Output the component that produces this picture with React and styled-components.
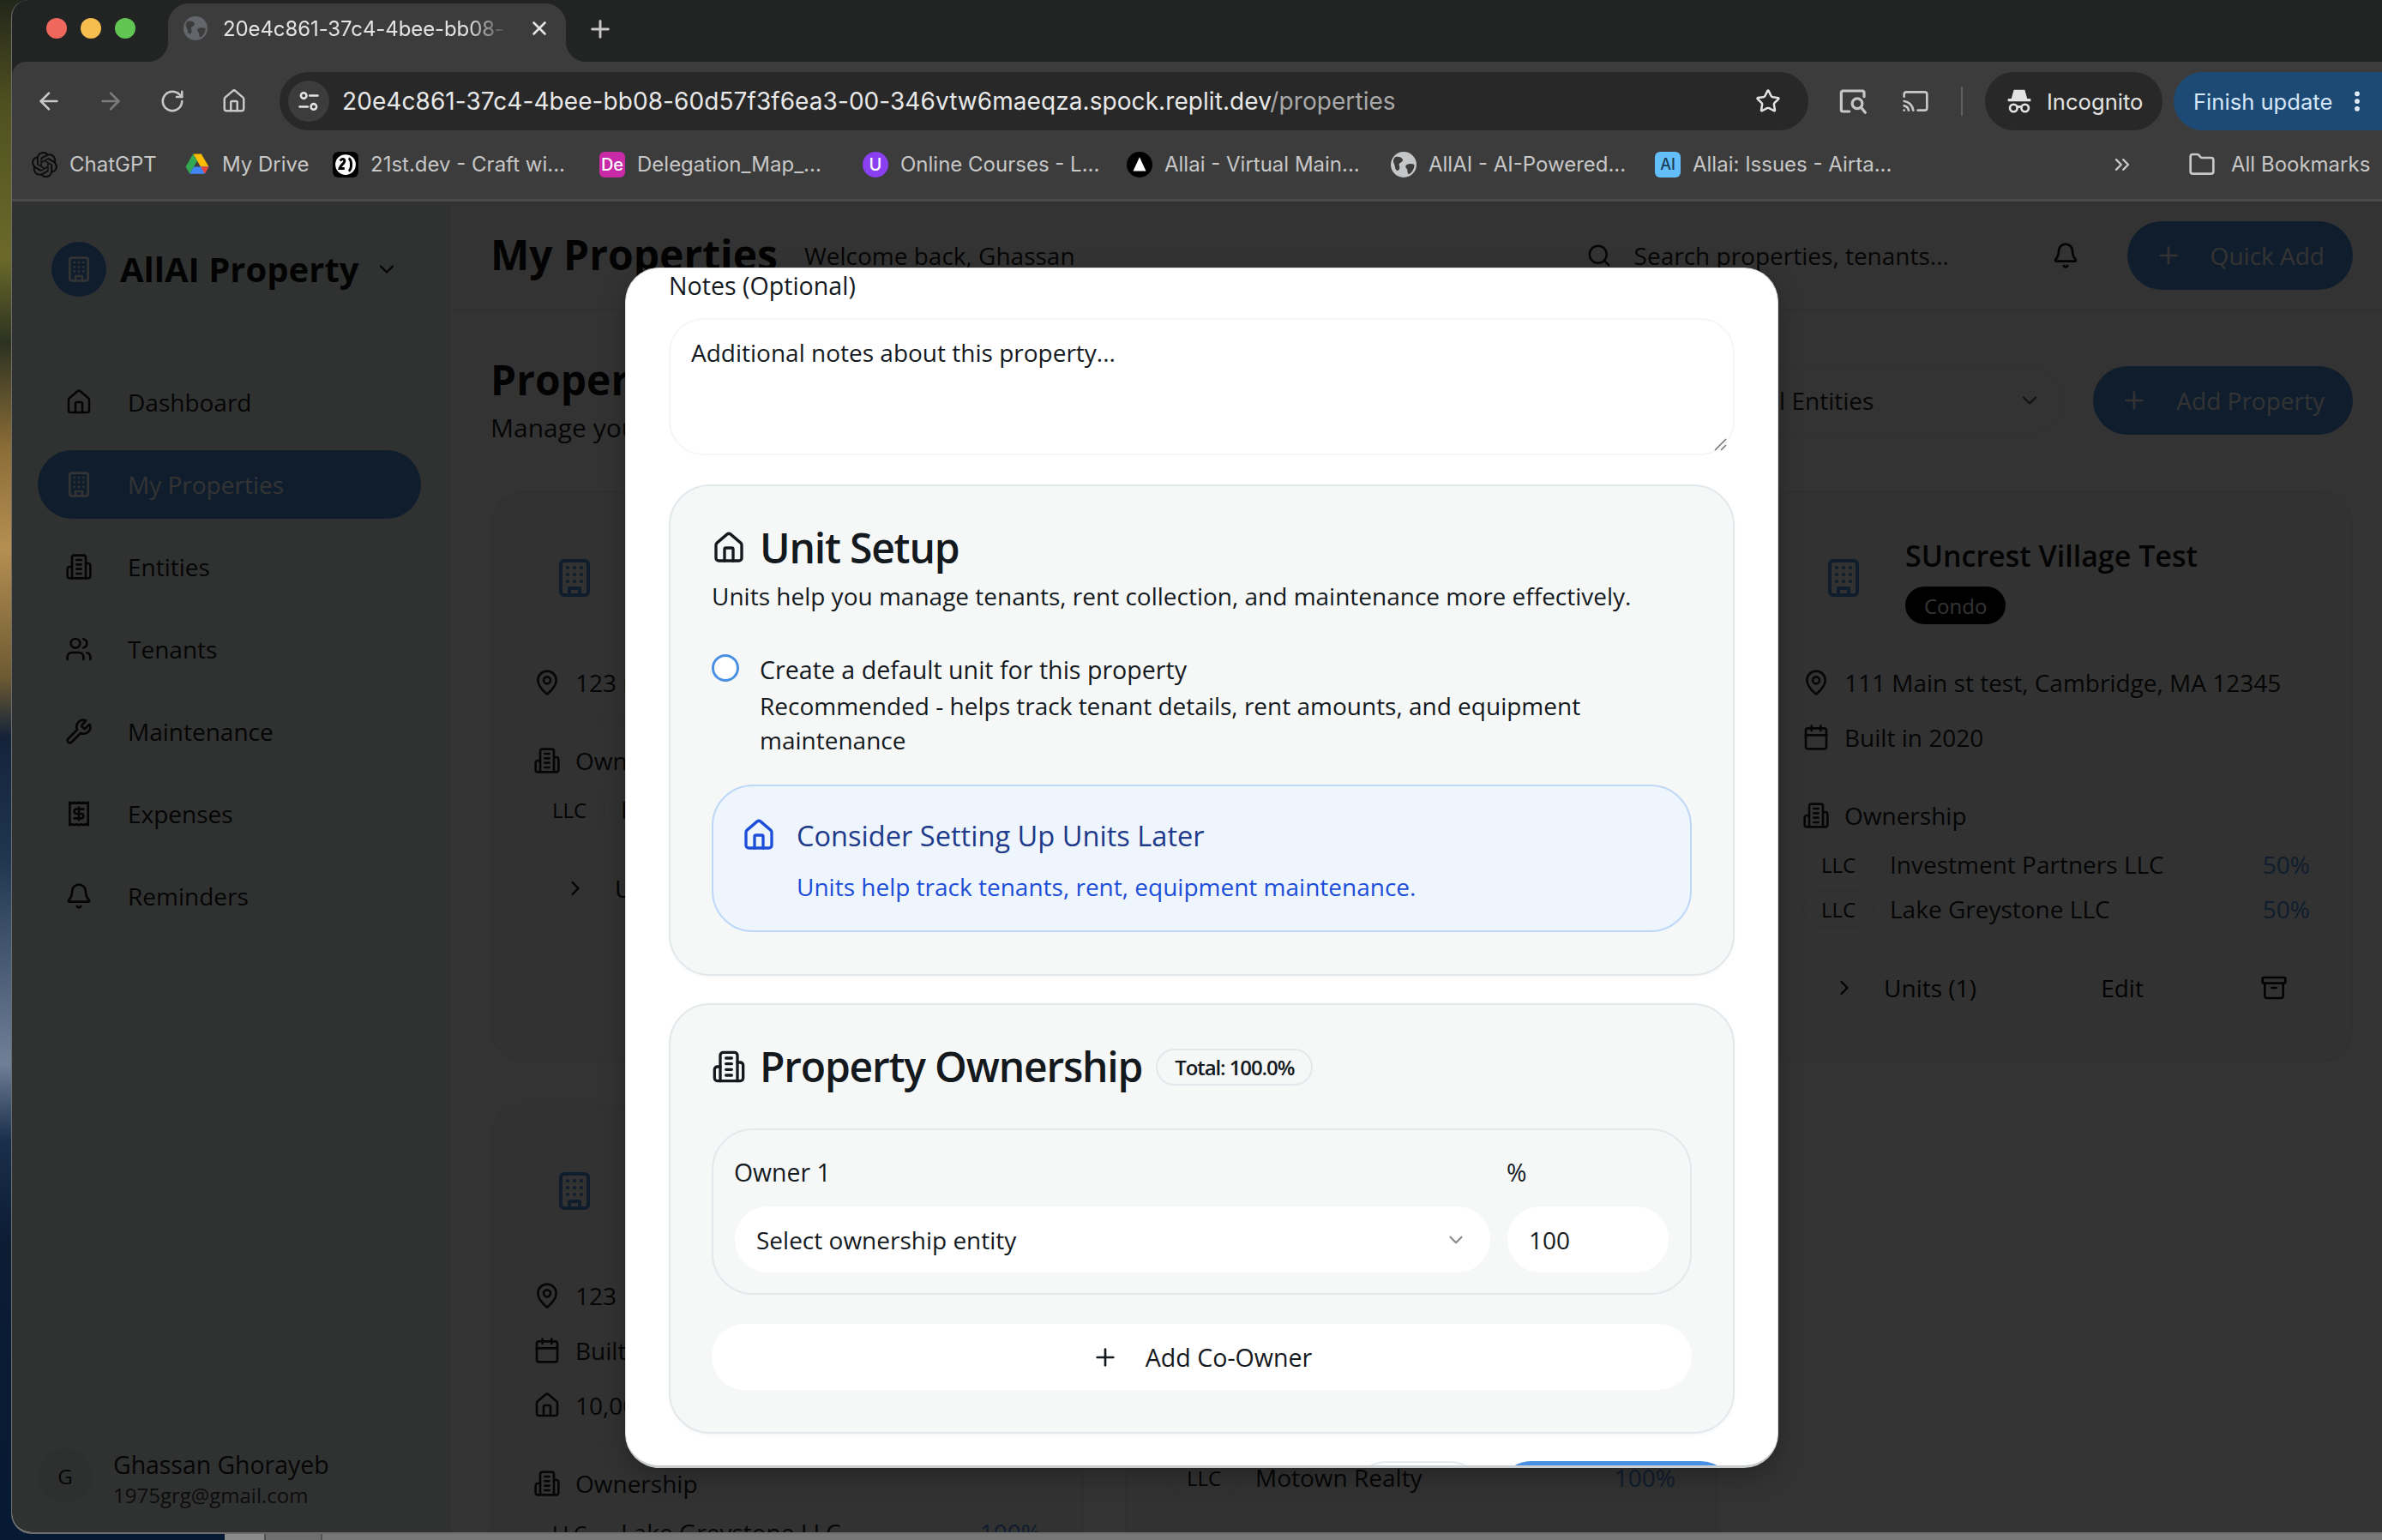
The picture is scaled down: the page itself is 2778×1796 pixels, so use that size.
import React from "react";
import styled, { createGlobalStyle } from "styled-components";
import {
  ArrowLeft, ArrowRight, RotateCw, Home, Star, Cast, MoreVertical, X, Plus, Folder, ChevronsRight,
  ChevronDown, ChevronRight, Users, Wrench, Receipt, Bell, Search, MapPin, Calendar, Archive,
} from "lucide-react";
import { SiOpenai } from "react-icons/si";

const GlobalStyle = createGlobalStyle`
  html, body { margin: 0; padding: 0; background: #0b1a2c; }
  * { box-sizing: border-box; }
`;

const CHROME = `Inter, "Liberation Sans", sans-serif`;
const APP = `"Open Sans", "Noto Sans", sans-serif`;

const Desktop = styled.div`
  width: 2778px; height: 1796px; overflow: hidden; display: flex; flex-direction: column;
  background: linear-gradient(180deg, #23271a 0, #4f5020 120px, #6b6a2a 300px, #2c3220 400px, #8a6c36 520px, #b58f52 640px, #6d5a32 790px, #14233a 860px, #1f3550 1000px, #6f7f96 1240px, #1a2f4c 1330px, #0b1c33 1450px, #071a33 100%);
`;
const Window = styled.div`
  height: 1789px; margin-left: 13px; flex: none; display: flex; flex-direction: column; overflow: hidden;
  background: #222423; border-left: 1px solid #6e6e6e; border-bottom: 2px solid #6e6e6e;
  border-radius: 20px 0 0 24px; font-family: ${CHROME};
`;
const DockStrip = styled.div`
  flex: 1; margin-left: 262px; background: linear-gradient(90deg, #8b8b8b 0, #8b8b8b 46px, #222 47px, #6f6f6f 48px, #6f6f6f 112px, #333 113px, #777 114px);
`;

/* tab strip */
const TabStrip = styled.div`
  height: 72px; flex: none; display: flex; align-items: flex-end; padding-left: 40px; color: #e3e3e3;
`;
const Lights = styled.div`
  display: flex; gap: 16px; align-self: flex-start; padding-top: 21px; margin-right: 38px;
`;
const Light = styled.span`
  width: 24px; height: 24px; border-radius: 50%; background: ${(p) => p.$c};
`;
const Tab = styled.div`
  position: relative; width: 464px; height: 68px; background: #3c3c3c; border-radius: 24px 24px 0 0;
  display: flex; align-items: center; padding: 0 0 10px 18px; gap: 18px;
  &::before, &::after { content: ""; position: absolute; bottom: 0; width: 24px; height: 24px; }
  &::before { left: -24px; background: radial-gradient(circle at 0 0, transparent 24px, #3c3c3c 24.5px); }
  &::after { right: -24px; background: radial-gradient(circle at 100% 0, transparent 24px, #3c3c3c 24.5px); }
`;
const TabTitle = styled.span`
  width: 333px; white-space: nowrap; font-size: 24px; color: #e3e3e3; letter-spacing: -0.1px;
  -webkit-mask-image: linear-gradient(90deg, #000 86%, transparent 100%);
  mask-image: linear-gradient(90deg, #000 86%, transparent 100%);
`;
const TabClose = styled.span`
  display: flex; color: #e3e3e3; margin-left: 5px;
`;
const NewTab = styled.span`
  display: flex; align-self: center; margin: -4px 0 0 24px; color: #c7c7c7;
`;

/* toolbar */
const Toolbar = styled.div`
  height: 86px; flex: none; display: flex; align-items: flex-end; padding: 0 0 6px 7px; background: #3c3c3c;
  border-radius: 16px 0 0 0; color: #c7c7c7;
`;
const NavBtn = styled.span`
  width: 72px; height: 68px; flex: none; display: flex; align-items: center; justify-content: center;
  color: ${(p) => (p.$dim ? "#7b7b7b" : "#c7c7c7")};
`;
const Address = styled.div`
  flex: 1; height: 68px; margin: 0 17px; border-radius: 34px; background: #282828; display: flex; align-items: center;
  padding: 0 32px 0 10px; min-width: 0;
`;
const TuneChip = styled.span`
  width: 48px; height: 48px; border-radius: 50%; background: #3c3c3c; display: flex; align-items: center; justify-content: center; flex: none;
  margin-right: 15px; color: #e3e3e3;
`;
const Url = styled.span`
  flex: 1; font-size: 28px; color: #e8e8e8; white-space: nowrap; letter-spacing: 0.07px;
`;
const UrlPath = styled.span`
  color: #a8a8a8;
`;
const ToolDivider = styled.span`
  width: 2px; height: 34px; background: #5e5e5e; margin: 0 26px 17px 17px; flex: none;
`;
const Incognito = styled.div`
  width: 207px; height: 68px; flex: none; border-radius: 34px; background: #282828; display: flex; align-items: center;
  padding-left: 24px; gap: 16px; font-size: 25.6px; color: #e3e3e3;
`;
const FinishUpdate = styled.div`
  width: 243px; height: 68px; flex: none; margin-left: 13px; border-radius: 34px 0 0 34px; background: #1d4a75; display: flex; align-items: center;
  padding-left: 23px; font-size: 25.6px; color: #d5e6f8; justify-content: space-between; padding-right: 14px;
`;

/* bookmarks */
const Bookmarks = styled.div`
  height: 77px; flex: none; display: flex; padding: 0 16px 7px 23px; align-items: center; background: #3c3c3c;
  border-bottom: 3px solid #4a4a4a; font-size: 24px; color: #c7c7c7;
`;
const Bookmark = styled.div`
  width: ${(p) => p.$w}px; flex: none; display: flex; align-items: center; gap: 14px; white-space: nowrap;
`;
const Favicon = styled.span`
  width: 30px; height: 30px; flex: none; display: flex; align-items: center; justify-content: center; border-radius: ${(p) => p.$r || "6px"};
  background: ${(p) => p.$bg || "transparent"}; color: ${(p) => p.$fg || "#fff"}; font-size: ${(p) => p.$fs || 18}px; font-weight: 500; overflow: hidden;
`;
const MoreBookmarks = styled.span`
  display: flex; margin-left: 291px; color: #c7c7c7;
`;
const BookmarkDivider = styled.span`
  width: 2px; height: 32px; background: #5e5e5e; margin: 0 33px 0 30px;
`;
const AllBookmarks = styled.div`
  display: flex; align-items: center; gap: 18px; white-space: nowrap;
`;

/* app */
const AppArea = styled.div`
  position: relative; flex: 1; min-height: 0; display: flex; background: #fff; font-family: ${APP}; color: #1a1f24;
`;
const Sidebar = styled.aside`
  width: 511px; flex: none; display: flex; flex-direction: column; background: #f0f5f5; border-right: 2px solid #eaeeee;
`;
const Brand = styled.div`
  height: 159px; flex: none; display: flex; align-items: center; padding-left: 46px; gap: 16px; border-bottom: 2px solid #eaeeee;
`;
const BrandLogo = styled.span`
  width: 64px; height: 64px; border-radius: 50%; background: #4a90e2; color: #fff; display: flex; align-items: center; justify-content: center; flex: none;
`;
const BrandName = styled.span`
  font-size: 40px; font-weight: 700; color: #111; white-space: nowrap;
`;
const BrandCaret = styled.span`
  display: flex; margin-left: 2px; color: #111;
`;
const Nav = styled.nav`
  flex: 1; display: flex; flex-direction: column; gap: 16px; padding: 35px 32px 0 30px;
`;
const NavItem = styled.div`
  height: 80px; border-radius: 40px; display: flex; align-items: center; gap: 41px; padding: 0 32px; font-size: 28px;
  background: ${(p) => (p.$active ? "#4a90e2" : "transparent")}; color: ${(p) => (p.$active ? "#fff" : "#1c1c1c")};
`;
const SideFooter = styled.div`
  height: 136px; flex: none; border-top: 2px solid #eaeeee; display: flex; align-items: flex-start; padding: 36px 0 0 30px; gap: 24px;
`;
const Avatar = styled.span`
  width: 64px; height: 64px; border-radius: 50%; background: #e6e9e9; display: flex; align-items: center; justify-content: center; font-size: 24px; font-weight: 500; color: #222; flex: none;
`;
const UserText = styled.div`
  display: flex; flex-direction: column; margin-top: 0;
`;
const UserName = styled.span`
  font-size: 28.4px; line-height: 38px; color: #222; white-space: nowrap;
`;
const UserMail = styled.span`
  font-size: 24px; line-height: 34px; color: #444; white-space: nowrap;
`;

const Main = styled.main`
  flex: 1; min-width: 0; display: flex; flex-direction: column; overflow: hidden;
`;
const TopBar = styled.header`
  height: 127px; flex: none; display: flex; align-items: center; padding: 0 34px 0 47px; border-bottom: 2px solid #f0f2f2; gap: 31px;
`;
const PageTitle = styled.h1`
  margin: 0 0 3px; font-size: 48px; font-weight: 700; color: #111; white-space: nowrap;
`;
const Welcome = styled.span`
  font-size: 28px; color: #222; white-space: nowrap; margin-top: 1px;
`;
const TopRight = styled.div`
  margin-left: auto; display: flex; align-items: center; gap: 40px;
`;
const SearchBox = styled.div`
  width: 495px; height: 64px; display: flex; align-items: center; gap: 26px; padding-left: 8px; font-size: 28px; color: #222; border-radius: 32px;
`;
const BellBtn = styled.span`
  width: 64px; height: 64px; display: flex; align-items: center; justify-content: center; color: #111;
`;
const PrimaryBtn = styled.div`
  height: 80px; border-radius: 40px; background: #4a90e2; color: #fff; display: flex; align-items: center; gap: 33px; padding: 0 33px 0 32px; font-size: 28px; font-weight: 500; white-space: nowrap;
`;
const PageHead = styled.section`
  flex: none; display: flex; align-items: center; justify-content: space-between; padding: 53px 34px 53px 47px;
`;
const HeadText = styled.div`
  display: flex; flex-direction: column; gap: 8px;
`;
const SectionTitle = styled.h2`
  margin: 0; font-size: 48px; line-height: 56px; font-weight: 700; color: #111;
`;
const SectionSub = styled.p`
  margin: 0; font-size: 30px; line-height: 40px; color: #222;
`;
const HeadActions = styled.div`
  display: flex; align-items: center; gap: 34px;
`;
const EntitySelect = styled.div`
  width: 410px; height: 80px; display: flex; align-items: center; justify-content: space-between; padding: 0 24px 0 51px; font-size: 28px; color: #222; border: 2px solid #f4f6f6; border-radius: 40px;
`;
const CardGrid = styled.div`
  display: grid; grid-template-columns: repeat(3, 1fr); gap: 48px; padding: 0 34px 0 47px; align-items: stretch;
`;
const Card = styled.article`
  min-height: 667px; background: #f7f9f9; border: 2px solid #ecefef; border-radius: 40px; padding: 46px 48px 50px;
`;
const CardHead = styled.div`
  display: flex; gap: 24px; height: 108px; margin-bottom: 48px;
`;
const CardIcon = styled.span`
  width: 96px; flex: none; display: flex; align-items: center; justify-content: center; color: #4a90e2;
`;
const CardTitles = styled.div`
  display: flex; flex-direction: column; align-items: flex-start; gap: 8px;
`;
const CardTitle = styled.h3`
  margin: 0; font-size: 34px; line-height: 56px; font-weight: 600; color: #111; white-space: nowrap;
`;
const Kind = styled.span`
  height: 44px; display: flex; align-items: center; padding: 0 22px; border-radius: 22px; background: #000; color: #fff; font-size: 24px; font-weight: 500;
`;
const InfoList = styled.div`
  display: flex; flex-direction: column; gap: 24px;
`;
const InfoRow = styled.div`
  height: 40px; display: flex; align-items: center; gap: 17px; font-size: 28px; color: #222; white-space: nowrap;
`;
const CardDivider = styled.hr`
  border: 0; border-top: 2px solid #eceeee; margin: 23px 0 26px;
`;
const OwnerHead = styled(InfoRow)`
  margin-bottom: 15px;
`;
const OwnerRow = styled.div`
  height: 44px; display: flex; align-items: center; font-size: 28px; color: #222; margin-bottom: 8px; white-space: nowrap;
`;
const LlcTag = styled.span`
  width: 84px; height: 44px; flex: none; border-radius: 22px; border: 2px solid #ecefef; display: flex; align-items: center; justify-content: center; font-size: 24px; font-weight: 500; margin-right: 18px; color: #111;
`;
const OwnerShare = styled.span`
  margin-left: auto; color: #4a90e2;
`;
const CardActions = styled.div`
  display: grid; grid-template-columns: 1fr 1fr 84px; height: 64px; margin-top: 38px; font-size: 28px; font-weight: 500; color: #111; gap: 16px;
`;
const CardAction = styled.span`
  display: flex; align-items: center; justify-content: center; gap: 32px; border-radius: 32px; white-space: nowrap;
`;

/* modal */
const Overlay = styled.div`
  position: absolute; inset: 0; background: rgba(0, 0, 0, 0.8); display: flex; align-items: center; justify-content: center; padding: 2px 0 0 11px;
`;
const Modal = styled.div`
  width: 1345px; height: 1400px; background: #fff; border-radius: 40px; overflow: hidden; padding: 0 50px; border: 1px solid #d7dbde; border-bottom: 3px solid #c9cdd0;
  box-shadow: 0 10px 30px rgba(0,0,0,.25); color: #14191e; font-size: 28px;
`;
const FieldLabel = styled.div`
  font-size: 28.6px; line-height: 40px; font-weight: 500; color: #14191e;
`;
const NotesBox = styled.div`
  position: relative; height: 160px; margin: 18px 0 34px; border: 2px solid #f4f6f7; border-radius: 40px; padding: 18px 24px; font-size: 28px; line-height: 40px;
`;
const Grip = styled.svg`
  position: absolute; right: 6px; bottom: 2px; color: #777;
`;
const Panel = styled.section`
  background: #f6f8f8; border: 2px solid #e3e8ec; border-radius: 48px; padding: 46px 48px 49px; margin-bottom: 32px; box-shadow: 0 2px 4px rgba(0,0,0,.03);
`;
const PanelTitleRow = styled.div`
  display: flex; align-items: center; gap: 16px; height: 52px;
`;
const PanelTitle = styled.h3`
  margin: 0; font-size: 48px; font-weight: 600; line-height: 52px; white-space: nowrap; color: #14191e; letter-spacing: -1.2px;
`;
const PanelIntro = styled.p`
  margin: 10px 0 46px; font-size: 28px; line-height: 40px; white-space: nowrap;
`;
const RadioRow = styled.div`
  display: flex; gap: 24px;
`;
const Radio = styled.span`
  width: 32px; height: 32px; margin-top: 2px; flex: none; border-radius: 50%; border: 3px solid #4a90e2; background: #fff;
`;
const RadioText = styled.div`
  display: flex; flex-direction: column; font-size: 28px; line-height: 40px;
`;
const RadioTitle = styled.span`
  font-size: 28.6px; font-weight: 500; margin-bottom: 2px;
`;
const Callout = styled.div`
  margin-top: 32px; height: 172px; border: 2px solid #bcd7f7; background: #eef5fd; border-radius: 48px; padding: 35px 33px 0; color: #1e3a8a; position: relative;
`;
const CalloutHead = styled.div`
  display: flex; align-items: center; gap: 24px; height: 44px; color: #1d4ed8;
`;
const CalloutTitle = styled.span`
  font-size: 32.6px; font-weight: 500; color: #1e3a8a; white-space: nowrap;
`;
const CalloutText = styled.p`
  margin: 18px 0 0 64px; font-size: 28px; line-height: 40px; color: #1d4ed8; white-space: nowrap;
`;
const Badge = styled.span`
  height: 43px; display: flex; align-items: center; padding: 0 20px; border: 2px solid #e3e8ec; border-radius: 22px; font-size: 24px; font-weight: 600; letter-spacing: -1.1px; white-space: nowrap;
`;
const OwnerBox = styled.div`
  margin-top: 46px; border: 2px solid #e3e8ec; border-radius: 48px; padding: 29px 25px 24px; display: grid; grid-template-columns: 1fr 188px; column-gap: 20px; row-gap: 20px;
`;
const GridLabel = styled.span`
  font-size: 28.4px; line-height: 40px; font-weight: 500; margin-left: -1px;
`;
const WhiteField = styled.div`
  height: 77px; background: #fff; border-radius: 40px; display: flex; align-items: center; justify-content: space-between; padding: 0 27px 0 25px; font-size: 28px;
`;
const AddOwner = styled.div`
  margin-top: 34px; height: 77px; background: #fff; border-radius: 40px; display: flex; align-items: center; justify-content: center; gap: 31px; font-size: 28.6px; font-weight: 500;
`;
const ModalFooter = styled.div`
  display: flex; justify-content: flex-end; gap: 15px;
`;
const OutlineAction = styled.span`
  width: 154px; height: 80px; border: 2px solid #e6eaec; border-radius: 40px;
`;
const SubmitAction = styled.span`
  width: 277px; height: 80px; background: #4a90e2; border-radius: 40px;
`;

/* small drawings */
const StrokeIcon = ({ size = 32, children }) => (
  <svg width={size} height={size} viewBox="0 0 24 24" fill="none" stroke="currentColor" strokeWidth="2" strokeLinecap="round" strokeLinejoin="round">
    {children}
  </svg>
);
const BuildingIcon = ({ size }) => (
  <StrokeIcon size={size}>
    <rect x="4" y="2" width="16" height="20" rx="2" />
    <path d="M9 22v-4h6v4M8 6h.01M12 6h.01M16 6h.01M8 10h.01M12 10h.01M16 10h.01M8 14h.01M12 14h.01M16 14h.01" />
  </StrokeIcon>
);
const EntityIcon = ({ size }) => (
  <StrokeIcon size={size}>
    <path d="M6 22V4a2 2 0 0 1 2-2h8a2 2 0 0 1 2 2v18Z" />
    <path d="M6 12H4a2 2 0 0 0-2 2v6a2 2 0 0 0 2 2h2M18 9h2a2 2 0 0 1 2 2v9a2 2 0 0 1-2 2h-2M10 6h4M10 10h4M10 14h4M10 18h4" />
  </StrokeIcon>
);
const Globe = ({ size = 28, fill = "#62666b", land = "#3c3c3c" }) => (
  <svg width={size} height={size} viewBox="0 0 24 24">
    <circle cx="12" cy="12" r="12" fill={fill} />
    <path d="M4 5c3-1 6 0 7 2s-2 3-3 4 1 3 0 5-2 2-3 1-1-4-2-6-1-4 1-6zM15 12c2-1 5-1 7 0 0 4-2 7-5 9-2-1-1-4-2-5s-2-3 0-4z" fill={land} />
  </svg>
);
const TuneIcon = () => (
  <svg width="28" height="28" viewBox="0 0 24 24" fill="none" stroke="currentColor" strokeWidth="2.2" strokeLinecap="round">
    <circle cx="7" cy="6.5" r="2.8" /><path d="M13 6.5h8M3 17.5h8" /><circle cx="17" cy="17.5" r="2.8" />
  </svg>
);
const LensIcon = () => (
  <svg width="36" height="32" viewBox="0 0 26 24" fill="none" stroke="currentColor" strokeWidth="2.4" strokeLinecap="round">
    <path d="M22 8V4.500A1.500 1.500 0 0 0 20.500 3h-17A1.500 1.500 0 0 0 2 4.500v15A1.500 1.500 0 0 0 3.500 21H9" /><circle cx="16" cy="14" r="4.400" /><path d="M19.400 17.400 23 22" />
  </svg>
);
const IncognitoIcon = () => (
  <svg width="32" height="32" viewBox="0 0 24 24" fill="none" stroke="currentColor" strokeWidth="2">
    <path d="M8 3h8l2 7H6z" fill="currentColor" /><path d="M2 11h20" strokeWidth="2.4" />
    <circle cx="7" cy="18" r="3.2" /><circle cx="17" cy="18" r="3.2" /><path d="M10 17.500c1.200-.8 2.800-.8 4 0" />
  </svg>
);
const DriveIcon = () => (
  <svg width="30" height="30" viewBox="0 0 24 24">
    <path d="M8.200 2h7.600l7 12h-7.600z" fill="#fbbc04" /><path d="M8.200 2 1.200 14l3.800 6.500 7-12z" fill="#34a853" />
    <path d="M8.800 14h14l-3.800 6.500H5z" fill="#4285f4" /><path d="M22.800 14 19 20.500l-3.600-6.500z" fill="#ea4335" />
  </svg>
);
const TwentyOneIcon = () => (
  <svg width="30" height="30" viewBox="0 0 24 24">
    <rect width="24" height="24" rx="5" fill="#000" /><circle cx="12" cy="12" r="9.500" fill="#fff" />
    <path d="M7 8.500c1.500-2.500 4.500-2 4 .5s-3.500 3-4.500 6.500H11M15 6c3 2 3 10 0 12" fill="none" stroke="#000" strokeWidth="2.400" />
  </svg>
);
const TriangleIcon = () => (
  <svg width="30" height="30" viewBox="0 0 24 24">
    <circle cx="12" cy="12" r="12" fill="#000" /><path d="M12 5 18 18H6z" fill="#fff" />
  </svg>
);

const bookmarkItems = [
  { w: 178, label: "ChatGPT", icon: <Favicon $fg="#0b0b0b"><SiOpenai size={30} /></Favicon> },
  { w: 173, label: "My Drive", icon: <Favicon><DriveIcon /></Favicon> },
  { w: 311, label: "21st.dev - Craft wi...", icon: <Favicon><TwentyOneIcon /></Favicon> },
  { w: 307, label: "Delegation_Map_...", icon: <Favicon $bg="#c92aa8" $fs={20}>De</Favicon> },
  { w: 308, label: "Online Courses - L...", icon: <Favicon $bg="#8a3ff0" $r="50%" $fs={20}>U</Favicon> },
  { w: 308, label: "Allai - Virtual Main...", icon: <Favicon><TriangleIcon /></Favicon> },
  { w: 308, label: "AllAI - AI-Powered...", icon: <Favicon><Globe size={30} fill="#c4c6c8" land="#3c3c3c" /></Favicon> },
  { w: 240, label: "Allai: Issues - Airta...", icon: <Favicon $bg="#63bffb" $fg="#1a3a5a" $fs={18}>AI</Favicon> },
];

const navItems = [
  { icon: Home, label: "Dashboard" },
  { icon: BuildingIcon, label: "My Properties", active: true },
  { icon: EntityIcon, label: "Entities" },
  { icon: Users, label: "Tenants" },
  { icon: Wrench, label: "Maintenance" },
  { icon: Receipt, label: "Expenses" },
  { icon: Bell, label: "Reminders" },
];

const cards = [
  { address: "123 main st", owners: [["Motown Realty", "100%"]], units: "Units (0)" },
  { address: "123 Main St", built: "Built in 2020", owners: [["Motown Realty", "100%"]], units: "Units (1)" },
  { title: "SUncrest Village Test", kind: "Condo", address: "111 Main st test, Cambridge, MA 12345", built: "Built in 2020", owners: [["Investment Partners LLC", "50%"], ["Lake Greystone LLC", "50%"]], units: "Units (1)" },
  { address: "123 Main St", built: "Built in 2020", size: "10,000 sq ft", owners: [["Lake Greystone LLC", "100%"]], units: "Units (1)" },
  { address: "123 Main St", built: "Built in 2020", owners: [["Motown Realty", "100%"]], units: "Units (1)" },
];

const PropertyCard = ({ data }) => (
  <Card>
    <CardHead>
      <CardIcon><BuildingIcon size={48} /></CardIcon>
      <CardTitles>
        {data.title && <CardTitle>{data.title}</CardTitle>}
        {data.kind && <Kind>{data.kind}</Kind>}
      </CardTitles>
    </CardHead>
    <InfoList>
      <InfoRow><MapPin size={32} />{data.address}</InfoRow>
      {data.built && <InfoRow><Calendar size={32} />{data.built}</InfoRow>}
      {data.size && <InfoRow><Home size={32} />{data.size}</InfoRow>}
    </InfoList>
    <CardDivider />
    <OwnerHead><EntityIcon size={32} />Ownership</OwnerHead>
    {data.owners.map(([name, share]) => (
      <OwnerRow key={name}><LlcTag>LLC</LlcTag>{name}<OwnerShare>{share}</OwnerShare></OwnerRow>
    ))}
    <CardActions>
      <CardAction><ChevronRight size={28} />{data.units}</CardAction>
      <CardAction>Edit</CardAction>
      <CardAction><Archive size={32} /></CardAction>
    </CardActions>
  </Card>
);

export default function App() {
  return (
    <Desktop>
      <GlobalStyle />
      <Window>
        <TabStrip>
          <Lights>
            <Light $c="#f0685d" /><Light $c="#f6bd4f" /><Light $c="#61c553" />
          </Lights>
          <Tab>
            <Globe />
            <TabTitle>20e4c861-37c4-4bee-bb08-</TabTitle>
            <TabClose><X size={26} strokeWidth={2.4} /></TabClose>
          </Tab>
          <NewTab><Plus size={32} strokeWidth={2.2} /></NewTab>
        </TabStrip>
        <Toolbar>
          <NavBtn><ArrowLeft size={32} strokeWidth={2} /></NavBtn>
          <NavBtn $dim><ArrowRight size={32} strokeWidth={2} /></NavBtn>
          <NavBtn><RotateCw size={30} strokeWidth={2} /></NavBtn>
          <NavBtn><Home size={30} strokeWidth={2} /></NavBtn>
          <Address>
            <TuneChip><TuneIcon /></TuneChip>
            <Url>20e4c861-37c4-4bee-bb08-60d57f3f6ea3-00-346vtw6maeqza.spock.replit.dev<UrlPath>/properties</UrlPath></Url>
            <Star size={30} color="#e3e3e3" strokeWidth={2} />
          </Address>
          <NavBtn><LensIcon /></NavBtn>
          <NavBtn><Cast size={32} strokeWidth={2} /></NavBtn>
          <ToolDivider />
          <Incognito><IncognitoIcon />Incognito</Incognito>
          <FinishUpdate>Finish update<MoreVertical size={30} strokeWidth={2.6} color="#e8f1fb" /></FinishUpdate>
        </Toolbar>
        <Bookmarks>
          {bookmarkItems.map((b) => (
            <Bookmark key={b.label} $w={b.w}>{b.icon}{b.label}</Bookmark>
          ))}
          <MoreBookmarks><ChevronsRight size={28} /></MoreBookmarks>
          <BookmarkDivider />
          <AllBookmarks><Folder size={32} strokeWidth={2} />All Bookmarks</AllBookmarks>
        </Bookmarks>
        <AppArea>
          <Sidebar>
            <Brand>
              <BrandLogo><BuildingIcon size={32} /></BrandLogo>
              <BrandName>AllAI Property</BrandName>
              <BrandCaret><ChevronDown size={28} /></BrandCaret>
            </Brand>
            <Nav>
              {navItems.map(({ icon: Icon, label, active }) => (
                <NavItem key={label} $active={active}><Icon size={32} />{label}</NavItem>
              ))}
            </Nav>
            <SideFooter>
              <Avatar>G</Avatar>
              <UserText>
                <UserName>Ghassan Ghorayeb</UserName>
                <UserMail>1975grg@gmail.com</UserMail>
              </UserText>
            </SideFooter>
          </Sidebar>
          <Main>
            <TopBar>
              <PageTitle>My Properties</PageTitle>
              <Welcome>Welcome back, Ghassan</Welcome>
              <TopRight>
                <SearchBox><Search size={30} color="#222" />Search properties, tenants...</SearchBox>
                <BellBtn><Bell size={32} /></BellBtn>
                <PrimaryBtn><Plus size={32} />Quick Add</PrimaryBtn>
              </TopRight>
            </TopBar>
            <PageHead>
              <HeadText>
                <SectionTitle>Properties</SectionTitle>
                <SectionSub>Manage your properties</SectionSub>
              </HeadText>
              <HeadActions>
                <EntitySelect>All Entities<ChevronDown size={28} color="#555" /></EntitySelect>
                <PrimaryBtn><Plus size={32} />Add Property</PrimaryBtn>
              </HeadActions>
            </PageHead>
            <CardGrid>
              {cards.map((c, i) => <PropertyCard key={i} data={c} />)}
            </CardGrid>
          </Main>
          <Overlay>
            <Modal>
              <FieldLabel>Notes (Optional)</FieldLabel>
              <NotesBox>
                Additional notes about this property...
                <Grip width="18" height="18" viewBox="0 0 18 18" fill="none" stroke="currentColor" strokeWidth="1.6"><path d="M16 3 3 16M16 10l-6 6" /></Grip>
              </NotesBox>
              <Panel>
                <PanelTitleRow><Home size={40} /><PanelTitle>Unit Setup</PanelTitle></PanelTitleRow>
                <PanelIntro>Units help you manage tenants, rent collection, and maintenance more effectively.</PanelIntro>
                <RadioRow>
                  <Radio />
                  <RadioText>
                    <RadioTitle>Create a default unit for this property</RadioTitle>
                    <span>Recommended - helps track tenant details, rent amounts, and equipment<br />maintenance</span>
                  </RadioText>
                </RadioRow>
                <Callout>
                  <CalloutHead><Home size={40} /><CalloutTitle>Consider Setting Up Units Later</CalloutTitle></CalloutHead>
                  <CalloutText>Units help track tenants, rent, equipment maintenance.</CalloutText>
                </Callout>
              </Panel>
              <Panel>
                <PanelTitleRow>
                  <EntityIcon size={40} /><PanelTitle>Property Ownership</PanelTitle><Badge>Total: 100.0%</Badge>
                </PanelTitleRow>
                <OwnerBox>
                  <GridLabel>Owner 1</GridLabel>
                  <GridLabel>%</GridLabel>
                  <WhiteField>Select ownership entity<ChevronDown size={26} color="#888" /></WhiteField>
                  <WhiteField>100</WhiteField>
                </OwnerBox>
                <AddOwner><Plus size={32} />Add Co-Owner</AddOwner>
              </Panel>
              <ModalFooter>
                <OutlineAction />
                <SubmitAction />
              </ModalFooter>
            </Modal>
          </Overlay>
        </AppArea>
      </Window>
      <DockStrip />
    </Desktop>
  );
}
